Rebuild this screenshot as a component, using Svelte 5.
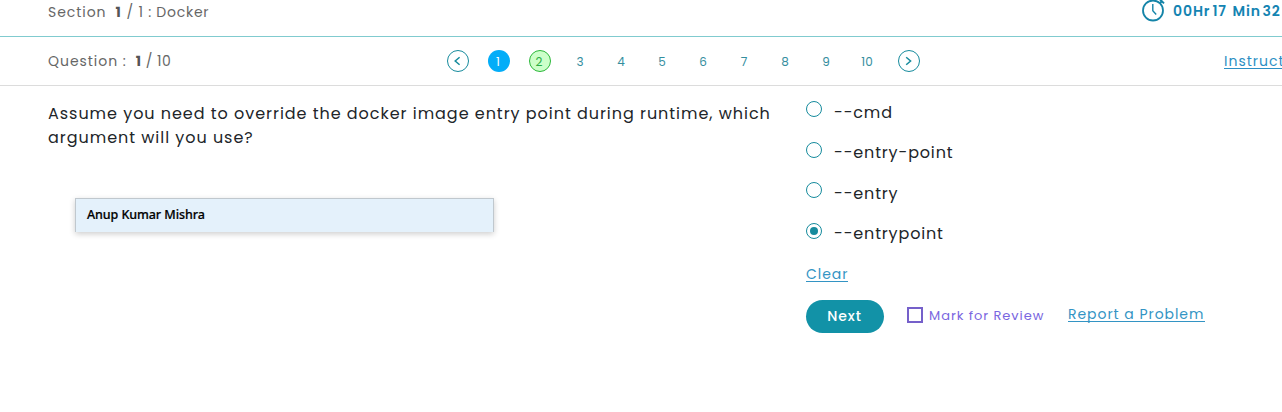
<script>
  const questions = [1, 2, 3, 4, 5, 6, 7, 8, 9, 10];
  const options = ['--cmd', '--entry-point', '--entry', '--entrypoint'];
  let current = $state(1);
  let selected = $state('--entrypoint');
  let review = $state(false);
</script>

<div class="page">
  <header class="section-bar">
    <div class="section"><span>Section</span><b>1</b><span>/ 1 : Docker</span></div>
    <div class="timer">
      <svg width="24" height="24" viewBox="0 0 24 24" fill="none" stroke="#1484a8" stroke-width="1.8">
        <circle cx="11" cy="12.5" r="10" />
        <path d="M10.8 6v6.7l3.4 3.8" stroke-width="1.4" />
        <path d="M17.8 5.2l2-2M17.6 1l4.4 4.4" stroke-width="2" />
      </svg>
      <span class="hr">00Hr</span><span class="min">17</span><span class="unit">Min</span><span>32</span>
    </div>
  </header>

  <nav class="question-bar">
    <div class="question"><span>Question :</span><b>1</b><span>/ 10</span></div>
    <div class="pager">
      <button class="dot arrow" aria-label="Previous">
        <svg width="10" height="10" viewBox="0 0 10 10"><path d="M6.6 1.2L2.2 5l4.4 3.8" /></svg>
      </button>
      {#each questions as n}
        <button class="dot" class:current={n === current} class:answered={n === 2} onclick={() => (current = n)}>{n}</button>
      {/each}
      <button class="dot arrow" aria-label="Next question">
        <svg width="10" height="10" viewBox="0 0 10 10"><path d="M2.2 1.2L6.6 5 2.2 8.8" /></svg>
      </button>
    </div>
    <a class="instructions" href="#top"><span>Instructions</span></a>
  </nav>

  <main>
    <section class="prompt">
      <p>Assume you need to override the docker image entry point during runtime, which<br />argument will you use?</p>
      <div class="name">Anup Kumar Mishra</div>
    </section>

    <section class="answers">
      {#each options as option}
        <label class="option">
          <input type="radio" name="answer" value={option} bind:group={selected} />
          <span class="radio"></span>
          <span class="text">{option}</span>
        </label>
      {/each}
      <a class="link clear" href="#top">Clear</a>
      <div class="actions">
        <button class="next">Next</button>
        <label class="review">
          <input type="checkbox" bind:checked={review} />
          <span class="box"></span>
          <span>Mark for Review</span>
        </label>
        <a class="link report" href="#top">Report a Problem</a>
      </div>
    </section>
  </main>
</div>

<style>
  :global(body) { background: #fff; overflow: hidden; }
  .page {
    width: 1282px; height: 412px; overflow: hidden;
    font-family: Poppins, Inter, sans-serif;
    color: #212529; background: #fff;
  }
  button { font: inherit; border: 0; padding: 0; background: none; cursor: pointer; }
  input { appearance: none; width: 0; height: 0; margin: 0; position: absolute; }
  .section-bar, .question-bar { display: flex; box-sizing: border-box; padding-left: 48px; white-space: nowrap; font-size: 14px; color: #666; }
  .section-bar { height: 37px; border-bottom: 1px solid #80cbcf; justify-content: space-between; }
  .question-bar { height: 49px; border-bottom: 1px solid #dcdcdc; }
  .section, .question { display: flex; line-height: 24px; letter-spacing: .95px; }
  .question { padding-top: 12px; width: 399px; flex: none; }
  b { font-weight: 700; color: #555; }
  b + span { letter-spacing: .75px; }
  .question b + span { letter-spacing: .5px; }
  .section b { width: 11px; margin-left: 9px; }
  .question b { width: 10px; margin-left: 9px; }
  .timer { display: flex; width: 141px; line-height: 23px; font-size: 14px; font-weight: 600; color: #1484b2; letter-spacing: .9px; }
  .timer svg { margin: -2px 7px 0 1px; flex: none; }
  .min { margin-left: 2px; width: 20px; }
  .unit { width: 30px; }
  .pager { display: flex; gap: 19px; padding-top: 13px; }
  .dot { width: 22px; height: 22px; box-sizing: border-box; border-radius: 50%; flex: none; display: flex; align-items: center; justify-content: center; font-size: 12px; line-height: 22px; color: #348e9e; padding: 1px 2px 0 0; }
  .dot.arrow { border: 1px solid #168b9d; padding: 0; }
  .arrow svg { fill: none; stroke: #168b9d; stroke-width: 1.5; }
  .dot.current { background: #03adf8; color: #fff; }
  .dot.answered { background: #ccffc9; border: 1px solid #2cb83a; color: #2cae45; }
  .instructions { margin: 12px 0 0 304px; font-size: 14px; line-height: 24px; color: #2c8fc4; letter-spacing: 1px; text-decoration: none; }
  .instructions span { display: block; height: 19px; border-bottom: 1px solid #2c8fc4; }
  main { display: flex; }
  .prompt { width: 758px; padding: 16px 0 0 48px; }
  p { margin: 0; font-size: 16px; line-height: 24px; letter-spacing: .965px; white-space: nowrap; }
  .name { box-sizing: border-box; width: 419px; height: 34px; margin: 48px 0 0 27px; padding-left: 11px; border: 1px solid #c0c8ce; border-bottom: 0; background: #e4f1fb; box-shadow: 0 2px 6px rgba(0, 0, 0, .2); font: 500 12.5px/31px "Noto Sans", sans-serif; letter-spacing: -.08px; color: #000; -webkit-text-stroke: .2px #000; }
  .answers { padding-top: 15px; }
  .option { display: flex; height: 40.4px; line-height: 23px; font-size: 16px; letter-spacing: .84px; }
  .option .radio { box-sizing: border-box; width: 16px; height: 16px; border: 1px solid #168b9d; border-radius: 50%; margin-right: 12px; flex: none; display: grid; place-items: center; }
  .option:nth-of-type(even) .radio { margin-top: .4px; }
  input:checked + .radio::after { content: ""; width: 8px; height: 8px; border-radius: 50%; background: #168b9d; }
  .link { display: block; color: #3394c4; text-decoration: none; border-bottom: 1px solid #3394c4; font-size: 14px; letter-spacing: .95px; white-space: nowrap; line-height: 20px; height: 18px; box-sizing: border-box; }
  .clear { width: 42px; margin-top: 1px; }
  .actions { display: flex; margin-top: 18px; }
  .next { width: 78px; height: 33px; border-radius: 17px; background: #1292a7; color: #fff; font-size: 14px; font-weight: 500; letter-spacing: .95px; padding-right: 1px; }
  .review { display: flex; width: 137px; margin-left: 23px; color: #7a66e0; font-size: 13px; line-height: 31px; letter-spacing: .95px; white-space: nowrap; }
  .box { box-sizing: border-box; width: 16px; height: 16px; border: 2px solid #7560ca; margin: 7px 6px 0 0; flex: none; }
  input:checked + .box { background: #7560ca; }
  .report { width: 137px; margin: 4px 0 0 24px; }
</style>
